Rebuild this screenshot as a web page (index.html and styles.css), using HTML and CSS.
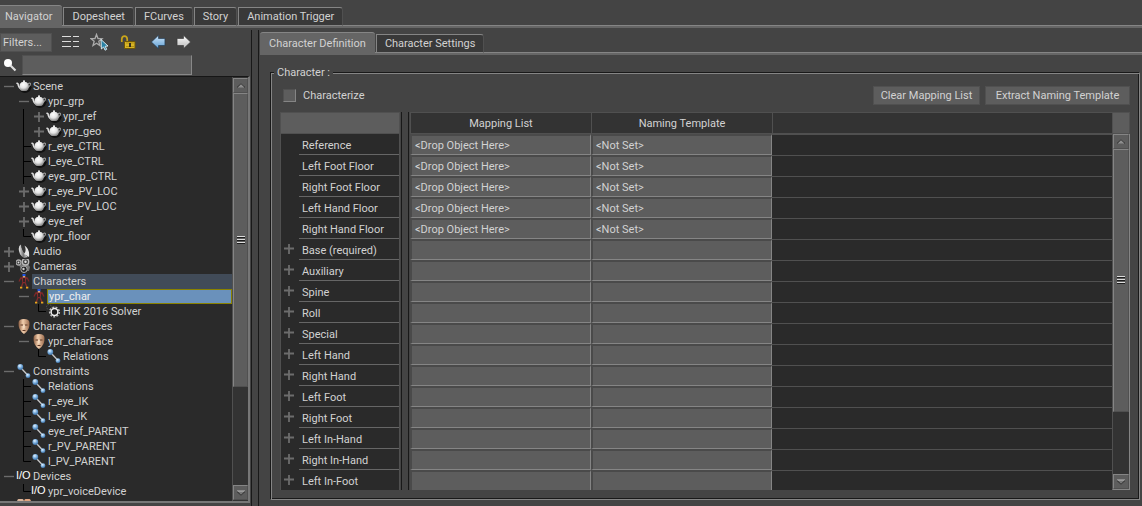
FILE: index.html
```html
<!DOCTYPE html>
<html lang="en">
<head>
<meta charset="utf-8">
<title>Navigator</title>
<link rel="stylesheet" href="styles.css">
</head>
<body>
<svg class="defs" aria-hidden="true">
  <defs>
    <radialGradient id="ball" cx=".4" cy=".3" r=".75"><stop offset="0" stop-color="#fff"/><stop offset=".5" stop-color="#e4e4e4"/><stop offset="1" stop-color="#777"/></radialGradient>
    <radialGradient id="blue" cx=".4" cy=".3" r=".7"><stop offset="0" stop-color="#e4f2ff"/><stop offset=".5" stop-color="#7fb2e0"/><stop offset="1" stop-color="#3a6fa6"/></radialGradient>
    <linearGradient id="skin"><stop offset="0" stop-color="#8a5c40"/><stop offset=".4" stop-color="#f2cfae"/><stop offset="1" stop-color="#9a6a4c"/></linearGradient>
    <linearGradient id="cone"><stop offset="0" stop-color="#eee"/><stop offset=".5" stop-color="#777"/><stop offset="1" stop-color="#ddd"/></linearGradient>
    <linearGradient id="sky" x2="0" y2="1"><stop offset="0" stop-color="#cfe6fa"/><stop offset="1" stop-color="#5d9dd2"/></linearGradient>
    <linearGradient id="pale" x2="0" y2="1"><stop offset="0" stop-color="#fff"/><stop offset="1" stop-color="#b8b8b8"/></linearGradient>
    <symbol id="minus" viewBox="0 0 15 15"><path d="M3 7.5h10" stroke="#6c6c6c" stroke-width="1.400"/></symbol>
    <symbol id="plus" viewBox="0 0 15 15"><path d="M3 7.5h10M8 3v10" stroke="#6c6c6c" stroke-width="1.800"/></symbol>
    <symbol id="line" viewBox="0 0 15 15"><path d="M7.5 0v15" stroke="#000"/></symbol>
    <symbol id="tee" viewBox="0 0 15 15"><path d="M7.5 0v15M7.5 7.5H15" stroke="#000"/></symbol>
    <symbol id="ell" viewBox="0 0 15 15"><path d="M7.5 0v7.5H15" stroke="#000" fill="none"/></symbol>
    <symbol id="pot" viewBox="0 0 16 15"><path d="M5 11.5q4 3 8 0l2-4" stroke="#111" stroke-width="2" fill="none"/><path d="M4.500 9.500Q2.500 8.500 2 4.800L.5 4" stroke="#ddd" stroke-width="1.500" fill="none"/><path d="M12 4.500q3-1.500 2.500.7T12 8.800" stroke="#aaa" fill="none"/><path d="M3.800 5Q5 2.800 8 2.800T12.500 5Q13.800 8 12 10.500L10.500 12h-5L4 10.500Q2.800 8 3.800 5Z" fill="url(#ball)"/><circle cx="8" cy="2.300" r="1.100" fill="#eee"/></symbol>
    <symbol id="speaker" viewBox="0 0 16 15"><path d="M5 .5Q2 2 3 7t5 7l4-1Q6 8 5 .5Z" fill="url(#cone)"/><path d="M5 .5Q13 4 12.800 13 6 9 5 .5Z" fill="#333"/><path d="M8.500 1.500Q14 5 13 13L8 10Q11 7 8.500 1.500Z" fill="#e6e6e6"/></symbol>
    <symbol id="camera" viewBox="0 0 16 15"><path d="m3 6 8-2 3 4-1 4H6Z" fill="#777"/><circle cx="2.500" cy="3.500" r="2.500" fill="#333" stroke="#aaa" stroke-width="1.300"/><circle cx="9.500" cy="2.800" r="3.200" fill="#444" stroke="#bbb" stroke-width="1.400"/><circle cx="2.500" cy="3.500" r="1" fill="#ddd"/><circle cx="9.500" cy="2.800" r="1.200" fill="#ddd"/><circle cx="8" cy="10.300" r="3.200" fill="#222" stroke="#aaa"/><circle cx="7.500" cy="10" r="1.200" fill="#ccc"/></symbol>
    <symbol id="man" viewBox="0 0 16 15"><path d="m3 7.500 1.800-3.500h6.400L13 7.500" stroke="#7c2828" stroke-width="1.300" fill="none"/><path d="M5.500 3.500h5L9.500 9h-3Z" fill="#8c2a2e"/><path d="M7.200 4h1.600v4H7.200Z" fill="#222"/><path d="M7 8.500 5.300 13M9 8.500 11 13" stroke="#7e2c2c" stroke-width="1.400"/><path d="M6.500 0h3v2h-3Z" fill="#1f55e8"/><path d="M6.800 2h2.400v1.500H6.800Z" fill="#dba37c"/><path d="M4 12.700h2.300v1.800H4Zm6 0h2.300v1.800H10Z" fill="#e8a51c"/></symbol>
    <symbol id="face" viewBox="0 0 16 15"><path d="M2.500 4Q2.500 0 8 0T13.500 4Q14 11 8 15 2 11 2.500 4Z" fill="url(#skin)"/><path d="M4.500 6h2.500m2 0h2.500M6.500 11.500h3" stroke="#5e3826"/><path d="M8 6v3.500" stroke="#fff0dc"/></symbol>
    <symbol id="link" viewBox="0 0 16 15"><path d="m5 4 7 7.500" stroke="#c8c8c8" stroke-width="1.300"/><circle cx="4.300" cy="3" r="2.900" fill="url(#blue)"/><circle cx="12" cy="11.700" r="2.400" fill="url(#blue)"/></symbol>
    <symbol id="gear" viewBox="0 0 16 15"><circle cx="3" cy="3" r="2.500" fill="none" stroke="#555" stroke-dasharray="1.500 1"/><circle cx="8.500" cy="8" r="4.800" fill="#111" stroke="#bbb" stroke-width="1.600" stroke-dasharray="2 1.300"/><circle cx="8.500" cy="8" r="3.400" fill="#1c1c1c" stroke="#f0f0f0" stroke-width="1.500"/></symbol>
    <symbol id="heads" viewBox="0 0 16 15"><circle cx="4.500" cy="3" r="3.500" fill="#d9b49a"/><circle cx="11.500" cy="3" r="3.500" fill="#e2a47e"/></symbol>
    <symbol id="up" viewBox="0 0 10 6"><path d="M1 4.500h8L5 .8Z" fill="#8e8e8e"/><path d="M1 4.500 5 .8l4 3.700" stroke="#111" stroke-dasharray="1 .6" fill="none"/></symbol>
    <symbol id="down" viewBox="0 0 10 6"><path d="M1 1h8L5 5Z" fill="#777"/><path d="M1 1h8" stroke="#bbb"/><path d="m1 1.500 4 3.700 4-3.700" stroke="#111" stroke-dasharray="1 .6" fill="none"/></symbol>
    <symbol id="grip" viewBox="0 0 8 9"><path d="M0 .5h8M0 3.500h8M0 6.500h8" stroke="#ddd"/><path d="M0 1.500h8M0 4.500h8M0 7.500h8" stroke="#1c1c1c"/></symbol>
  </defs>
</svg>

<nav class="tabs" role="tablist" aria-label="Windows">
  <button class="tab main-active active" role="tab" aria-selected="true">Navigator</button>
  <button class="tab" role="tab">Dopesheet</button>
  <button class="tab" role="tab">FCurves</button>
  <button class="tab" role="tab">Story</button>
  <button class="tab" role="tab">Animation Trigger</button>
</nav>

<div class="workspace">
  <aside class="sidebar">
    <div class="toolbar">
      <button class="btn filters">Filters...</button>
      <button class="tool list" aria-label="List view"><svg width="17" height="14" viewBox="0 0 17 14"><path d="M0 1.500h9M11 1.500h6M0 6.500h9M11 6.500h6M0 11.500h9M11 11.500h6" stroke="#ddd"/></svg></button>
      <button class="tool star" aria-label="Select favorite"><svg width="19" height="18" viewBox="0 0 19 18"><path d="m6.500 1.500 1.500 4 4 .2-3.200 2.600 1 4.200-3.300-2.300-3.500 2.300 1.200-4.200L1 5.700l4-.2Z" fill="none" stroke="#aaa" stroke-width="1.300"/><path d="m11 6.500 7 6.500-2.800.3 1.500 3-1.600.9-1.500-3.200-2.200 2Z" fill="#2b83a6" stroke="#e8f6fb" stroke-width=".9"/></svg></button>
      <button class="tool lock" aria-label="Unlock"><svg width="16" height="15" viewBox="0 0 16 15"><path d="M1.800 7V4Q2 1.200 4.500 1.200T7.200 4v3" fill="none" stroke="#c9a51b" stroke-width="1.700"/><path d="M4.500 6.500h10.500v7H4.500Z" fill="#d8b526" stroke="#6d5708"/><path d="M6 8h8M6 11.500h8" stroke="#b18f12"/><path d="M10 8v4" stroke="#222" stroke-width="1.800"/></svg></button>
      <button class="tool back" aria-label="Back"><svg width="15" height="14" viewBox="0 0 14 14" preserveAspectRatio="none"><path d="M.4 7 7 .3v3.200h6v7H7v3.200Z" fill="url(#sky)" stroke="#1c3750" stroke-width=".6"/></svg></button>
      <button class="tool" aria-label="Forward"><svg width="15" height="14" viewBox="0 0 14 14" preserveAspectRatio="none"><path d="M13.600 7 7 .3v3.200H1v7h6v3.200Z" fill="url(#pale)" stroke="#333" stroke-width=".6"/></svg></button>
    </div>
    <label class="search">
      <svg width="14" height="14" viewBox="0 0 14 14" role="img" aria-label="Search"><circle cx="5" cy="5" r="4" fill="#fff"/><path d="m7.500 7.500 5 5" stroke="#ddd" stroke-width="2.200"/></svg>
      <input type="text" aria-label="Search">
    </label>
    <div class="tree">
      <ul class="nodes">
        <li class="d0"><svg><use href="#minus"/></svg><svg class="ic"><use href="#pot"/></svg><span>Scene</span></li>
        <li class="d1"><svg><use href="#minus"/></svg><svg class="ic"><use href="#pot"/></svg><span>ypr_grp</span></li>
        <li class="d1"><svg><use href="#line"/></svg><svg><use href="#plus"/></svg><svg class="ic"><use href="#pot"/></svg><span>ypr_ref</span></li>
        <li class="d1"><svg><use href="#line"/></svg><svg><use href="#plus"/></svg><svg class="ic"><use href="#pot"/></svg><span>ypr_geo</span></li>
        <li class="d1"><svg><use href="#tee"/></svg><svg class="ic"><use href="#pot"/></svg><span>r_eye_CTRL</span></li>
        <li class="d1"><svg><use href="#tee"/></svg><svg class="ic"><use href="#pot"/></svg><span>l_eye_CTRL</span></li>
        <li class="d1"><svg><use href="#tee"/></svg><svg class="ic"><use href="#pot"/></svg><span>eye_grp_CTRL</span></li>
        <li class="d1"><svg><use href="#plus"/></svg><svg class="ic"><use href="#pot"/></svg><span>r_eye_PV_LOC</span></li>
        <li class="d1"><svg><use href="#plus"/></svg><svg class="ic"><use href="#pot"/></svg><span>l_eye_PV_LOC</span></li>
        <li class="d1"><svg><use href="#plus"/></svg><svg class="ic"><use href="#pot"/></svg><span>eye_ref</span></li>
        <li class="d1"><svg><use href="#ell"/></svg><svg class="ic"><use href="#pot"/></svg><span>ypr_floor</span></li>
        <li class="d0"><svg><use href="#plus"/></svg><svg class="ic"><use href="#speaker"/></svg><span>Audio</span></li>
        <li class="d0"><svg><use href="#plus"/></svg><svg class="ic"><use href="#camera"/></svg><span>Cameras</span></li>
        <li class="d0"><svg><use href="#minus"/></svg><svg class="ic"><use href="#man"/></svg><span class="parent">Characters</span></li>
        <li class="d1"><svg><use href="#minus"/></svg><svg class="ic"><use href="#man"/></svg><span class="selected">ypr_char</span></li>
        <li class="d2"><svg><use href="#ell"/></svg><svg class="ic"><use href="#gear"/></svg><span>HIK 2016 Solver</span></li>
        <li class="d0"><svg><use href="#minus"/></svg><svg class="ic"><use href="#face"/></svg><span>Character Faces</span></li>
        <li class="d1"><svg><use href="#minus"/></svg><svg class="ic"><use href="#face"/></svg><span>ypr_charFace</span></li>
        <li class="d2"><svg><use href="#ell"/></svg><svg class="ic"><use href="#link"/></svg><span>Relations</span></li>
        <li class="d0"><svg><use href="#minus"/></svg><svg class="ic"><use href="#link"/></svg><span>Constraints</span></li>
        <li class="d1"><svg><use href="#tee"/></svg><svg class="ic"><use href="#link"/></svg><span>Relations</span></li>
        <li class="d1"><svg><use href="#tee"/></svg><svg class="ic"><use href="#link"/></svg><span>r_eye_IK</span></li>
        <li class="d1"><svg><use href="#tee"/></svg><svg class="ic"><use href="#link"/></svg><span>l_eye_IK</span></li>
        <li class="d1"><svg><use href="#tee"/></svg><svg class="ic"><use href="#link"/></svg><span>eye_ref_PARENT</span></li>
        <li class="d1"><svg><use href="#tee"/></svg><svg class="ic"><use href="#link"/></svg><span>r_PV_PARENT</span></li>
        <li class="d1"><svg><use href="#ell"/></svg><svg class="ic"><use href="#link"/></svg><span>l_PV_PARENT</span></li>
        <li class="d0"><svg><use href="#minus"/></svg><b class="io">I/O</b><span>Devices</span></li>
        <li class="d1"><svg><use href="#ell"/></svg><b class="io">I/O</b><span>ypr_voiceDevice</span></li>
        <li class="d0"><svg></svg><svg class="ic"><use href="#heads"/></svg></li>
      </ul>
      <div class="scroll">
        <button class="arrow" aria-label="Scroll up"><svg><use href="#up"/></svg></button>
        <div class="track"><div class="thumb tree-thumb"><svg><use href="#grip"/></svg></div></div>
        <button class="arrow" aria-label="Scroll down"><svg><use href="#down"/></svg></button>
      </div>
    </div>
  </aside>
  <div class="splitter"></div>
  <main class="content">
    <nav class="tabs sub" role="tablist" aria-label="Character">
      <button class="tab active" role="tab" aria-selected="true">Character Definition</button>
      <button class="tab" role="tab">Character Settings</button>
    </nav>
    <fieldset class="group">
      <legend>Character :</legend>
      <div class="actions">
        <label class="check"><input type="checkbox">Characterize</label>
        <button class="btn clear">Clear Mapping List</button>
        <button class="btn extract">Extract Naming Template</button>
      </div>
      <div class="sheet">
        <table class="names">
          <colgroup><col class="expander"><col></colgroup>
          <thead><tr><th colspan="2"></th></tr></thead>
          <tbody>
            <tr><td></td><td>Reference</td></tr>
            <tr><td></td><td>Left Foot Floor</td></tr>
            <tr><td></td><td>Right Foot Floor</td></tr>
            <tr><td></td><td>Left Hand Floor</td></tr>
            <tr><td></td><td>Right Hand Floor</td></tr>
            <tr><td><svg><use href="#plus"/></svg></td><td>Base (required)</td></tr>
            <tr><td><svg><use href="#plus"/></svg></td><td>Auxiliary</td></tr>
            <tr><td><svg><use href="#plus"/></svg></td><td>Spine</td></tr>
            <tr><td><svg><use href="#plus"/></svg></td><td>Roll</td></tr>
            <tr><td><svg><use href="#plus"/></svg></td><td>Special</td></tr>
            <tr><td><svg><use href="#plus"/></svg></td><td>Left Hand</td></tr>
            <tr><td><svg><use href="#plus"/></svg></td><td>Right Hand</td></tr>
            <tr><td><svg><use href="#plus"/></svg></td><td>Left Foot</td></tr>
            <tr><td><svg><use href="#plus"/></svg></td><td>Right Foot</td></tr>
            <tr><td><svg><use href="#plus"/></svg></td><td>Left In-Hand</td></tr>
            <tr><td><svg><use href="#plus"/></svg></td><td>Right In-Hand</td></tr>
            <tr><td><svg><use href="#plus"/></svg></td><td>Left In-Foot</td></tr>
          </tbody>
        </table>
        <div class="divider"></div>
        <table class="mapping">
          <thead><tr><th class="col">Mapping List</th><th class="col">Naming Template</th><th></th></tr></thead>
          <tbody>
            <tr><td>&lt;Drop Object Here&gt;</td><td>&lt;Not Set&gt;</td><td></td></tr>
            <tr><td>&lt;Drop Object Here&gt;</td><td>&lt;Not Set&gt;</td><td></td></tr>
            <tr><td>&lt;Drop Object Here&gt;</td><td>&lt;Not Set&gt;</td><td></td></tr>
            <tr><td>&lt;Drop Object Here&gt;</td><td>&lt;Not Set&gt;</td><td></td></tr>
            <tr><td>&lt;Drop Object Here&gt;</td><td>&lt;Not Set&gt;</td><td></td></tr>
            <tr><td></td><td></td><td></td></tr>
            <tr><td></td><td></td><td></td></tr>
            <tr><td></td><td></td><td></td></tr>
            <tr><td></td><td></td><td></td></tr>
            <tr><td></td><td></td><td></td></tr>
            <tr><td></td><td></td><td></td></tr>
            <tr><td></td><td></td><td></td></tr>
            <tr><td></td><td></td><td></td></tr>
            <tr><td></td><td></td><td></td></tr>
            <tr><td></td><td></td><td></td></tr>
            <tr><td></td><td></td><td></td></tr>
            <tr><td></td><td></td><td></td></tr>
          </tbody>
        </table>
        <div class="side">
          <div class="corner"></div>
          <div class="scroll">
            <button class="arrow" aria-label="Scroll up"><svg><use href="#up"/></svg></button>
            <div class="track"><div class="thumb sheet-thumb"><svg><use href="#grip"/></svg></div></div>
            <button class="arrow" aria-label="Scroll down"><svg><use href="#down"/></svg></button>
          </div>
        </div>
      </div>
    </fieldset>
  </main>
</div>
</body>
</html>
```
FILE: styles.css
```css
* { box-sizing: border-box; }
body {
  margin: 0;
  height: 100vh;
  display: flex;
  flex-direction: column;
  overflow: hidden;
  background: #444;
  color: #d2d2d2;
  font: 11px/15px Roboto, "Noto Sans", sans-serif;
}
button, input { font: inherit; color: inherit; margin: 0; padding: 0; }
.defs { position: absolute; width: 0; height: 0; }

.tabs {
  flex: none;
  display: flex;
  align-items: flex-end;
  gap: 1px;
  padding-top: 5px;
  height: 28px;
  border-bottom: 2px solid #666;
  box-shadow: inset 0 -1px #858585;
}
.tab {
  height: 19px;
  padding: 0 8px;
  border: 1px solid #858585;
  border-right-color: #505050;
  border-radius: 0 3px 0 0;
  background: #393939;
  white-space: nowrap;
}
.tab.active {
  height: 23px;
  margin-bottom: -2px;
  padding: 0 9px 2px;
  border: 0;
  border-top: 1px solid #858585;
  background: #656565;
  border-radius: 3px 3px 0 0;
}
.tab.main-active { padding: 0 10px 2px 5px; border-radius: 0 3px 0 0; }
.sub { height: 23px; padding: 0; }

.workspace { flex: 1; min-height: 0; display: flex; }
.sidebar {
  flex: none;
  width: 251px;
  display: flex;
  flex-direction: column;
  padding: 4px 1px 3px 0;
}
.btn {
  height: 19px;
  border: 1px solid #505050;
  background: #5d5d5d;
  white-space: nowrap;
}
.toolbar { display: flex; align-items: center; height: 20px; margin-bottom: 3px; }
.filters { width: 52px; margin-right: 10px; padding-left: 2px; text-align: left; }
.tool { display: flex; border: 0; background: none; margin-right: 11px; }
.tool.lock { margin-right: 15px; }
.tool.back { margin-right: 10px; }
.search { display: flex; align-items: center; gap: 5px; height: 20px; padding-left: 3px; }
.search input {
  width: 170px;
  height: 20px;
  border: 1px solid #505050;
  border-right-color: #888;
  border-bottom-color: #888;
  background: #5d5d5d;
}

.tree {
  flex: 1;
  min-height: 0;
  display: flex;
  margin-top: 1px;
  border: solid #777;
  border-width: 1px 2px 2px 0;
  border-top-color: #161616;
  background: #2a2a2a;
}
.nodes {
  flex: 1;
  overflow: hidden;
  list-style: none;
  margin: 0;
  padding: 2px 0 0;
}
.nodes li { display: flex; height: 15px; white-space: nowrap; }
.nodes svg { flex: none; width: 15px; height: 15px; }
.nodes .ic { width: 16px; overflow: visible; }
.nodes span { flex: 1; padding-left: 1px; }
.nodes .parent { background: #414b58; }
.nodes .selected { background: #6a91bb; border: 1px solid #8a8200; line-height: 13px; color: #eee; }
.d0 { padding-left: 1px; }
.d1 { padding-left: 16px; }
.d2 { padding-left: 31px; }
.io { width: 16px; font: 11px/13px "Liberation Sans", Arial, sans-serif; color: #fff; }

.scroll {
  flex: 1;
  min-height: 0;
  width: 16px;
  display: flex;
  flex-direction: column;
  border-left: 1px solid #505050;
  background: #333;
}
.tree .scroll { flex: none; padding: 1px 0; }
.arrow {
  flex: none;
  height: 15px;
  display: flex;
  align-items: center;
  justify-content: center;
  border: 1px solid #858585;
  border-right-color: #505050;
  border-bottom-color: #505050;
  background: #5d5d5d;
}
.arrow svg { width: 10px; height: 6px; }
.track { flex: 1; min-height: 0; }
.thumb {
  display: flex;
  align-items: center;
  justify-content: center;
  border: 1px solid #858585;
  border-right-color: #505050;
  border-bottom-color: #505050;
  background: #5d5d5d;
}
.thumb svg { width: 8px; height: 9px; }
.tree-thumb { height: 75%; }
.sheet-thumb { height: 81%; }

.splitter { flex: none; width: 8px; margin-top: 2px; border: solid #191919; border-width: 0 1px; }
.content { flex: 1; min-width: 0; display: flex; flex-direction: column; padding: 4px 0 0 1px; }

.group {
  flex: 1;
  min-width: 0;
  min-height: 0;
  display: flex;
  flex-direction: column;
  margin: 10px 2px 6px 10px;
  padding: 6px 9px 9px;
  border: 1px solid #191919;
  border-right-color: #858585;
  border-bottom-color: #858585;
  box-shadow: inset 1px 1px #858585, inset -1px -1px #191919;
}
.group legend { padding: 0 3px; margin-left: -6px; background: #444; }
.actions { flex: none; display: flex; align-items: center; height: 19px; margin-bottom: 7px; }
.check { display: flex; align-items: center; gap: 7px; flex: 1; padding-left: 3px; }
.check input {
  appearance: none;
  width: 13px;
  height: 13px;
  border: 1px solid #505050;
  border-right-color: #858585;
  border-bottom-color: #858585;
  background: #5d5d5d;
}
.clear { width: 107px; margin-right: 5px; }
.extract { width: 145px; }

.sheet { flex: 1; min-height: 0; display: flex; align-items: flex-start; overflow: hidden; }
table { border-collapse: separate; border-spacing: 0; table-layout: fixed; }
th { height: 22px; padding: 0; font-weight: normal; border: 1px solid #505050; border-left: 0; background: #333; }
td { height: 21px; padding: 0; line-height: 17px; white-space: nowrap; }
.names { flex: none; width: 120px; background: #2a2a2a; border: solid #505050; border-width: 0 1px; }
.names th { background: #5d5d5d; border-right: 0; }
.expander { width: 18px; }
.names td:first-child { padding-bottom: 2px; }
.names td:last-child { padding: 2px 0 0 3px; border-bottom: 1px solid #666; }
.names td svg { display: block; width: 15px; height: 15px; }
.divider { flex: none; align-self: stretch; width: 8px; margin: 0 1px; border: solid #191919; border-width: 0 1px; }
.mapping { flex: 1; min-width: 0; background: #2a2a2a; }
.mapping .col { width: 181px; border-left: 1px solid #505050; border-right: 0; }
.mapping th:last-child { border-left: 1px solid #505050; border-right: 0; }
.mapping td { border: solid #4a4a4a; border-width: 2px 1px 1px 2px; border-right-color: #858585; border-bottom-color: #858585; padding-left: 3px; background: #5d5d5d; }
.mapping td:last-child { border: 0; border-top: 1px solid #505050; background: #2a2a2a; }
.side { flex: none; align-self: stretch; width: 18px; display: flex; flex-direction: column; }
.corner { flex: none; height: 22px; border: 1px solid #505050; background: #5d5d5d; }
.side .scroll { width: auto; border-right: 1px solid #858585; border-bottom: 1px solid #858585; }
```
